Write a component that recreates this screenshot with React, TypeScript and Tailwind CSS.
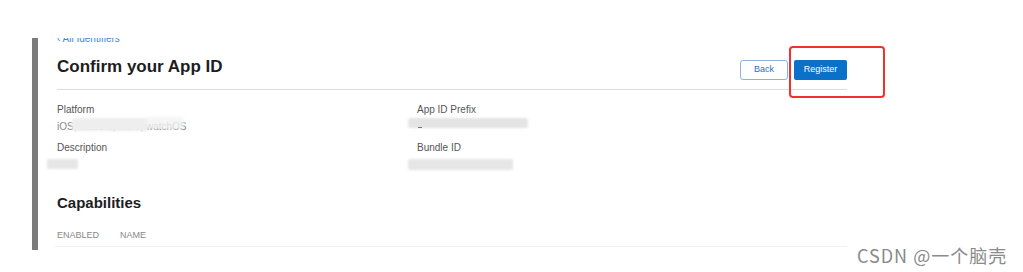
import React from 'react';

const Field: React.FC<{ label: string; children?: React.ReactNode }> = ({ label, children }) => (
  <div>
    <div className="text-[10px] leading-[12px] text-[#555]">{label}</div>
    <div className="relative mt-[5px] h-[12px] text-[10px] leading-[12px]">{children}</div>
  </div>
);

const Smudge: React.FC<{ className: string }> = ({ className }) => (
  <span className={`absolute rounded-[2px] blur-[1px] ${className}`} />
);

const App: React.FC = () => {
  return (
    <div className="relative h-[272px] w-[1023px] overflow-hidden bg-white font-['Liberation_Sans',Arial,sans-serif]">
      <div className="pl-[32px] pt-[38px]">
        <div className="h-[212px] w-[815px] border-l-[6px] border-[#7b7b7b] pl-[19px]">
          <div className="h-[6px] overflow-hidden">
            <div className="-mt-[4px] text-[10px] leading-[10px] text-[#3d8ad8]">‹ All Identifiers</div>
          </div>

          <div className="flex items-start justify-between">
            <h1 className="mt-[13px] text-[17px] font-bold leading-[20px] text-[#1d1d1f]">Confirm your App ID</h1>
            <div className="mt-[16px] flex gap-[6px]">
              <button className="h-[20px] w-[48px] rounded-[3px] border border-[#8db2df] bg-white text-[9px] text-[#2f6fbd]">
                Back
              </button>
              <button className="h-[20px] w-[53px] rounded-[2px] bg-[#0a70c8] text-[9px] text-white">Register</button>
            </div>
          </div>

          <div className="mt-[9px] h-px bg-[#dcdcdc]" />

          <div className="mt-[14px] grid grid-cols-[360px_1fr] gap-y-[9px]">
            <Field label="Platform">
              <span className="block text-[#888]">iOS, macOS, tvOS, watchOS</span>
              <Smudge className="left-[15px] top-[-3px] h-[13px] w-[76px] bg-[#eeeeee]" />
              <Smudge className="left-[90px] top-[-4px] h-[12px] w-[37px] bg-[#f2f2f2]/80" />
            </Field>
            <Field label="App ID Prefix">
              <Smudge className="left-[-9px] top-[-3px] h-[10px] w-[120px] bg-[#e4e4e4]" />
              <span className="absolute left-[1px] top-[6px] h-px w-[4px] bg-[#777]" />
            </Field>
            <Field label="Description">
              <Smudge className="left-[-10px] top-[0px] h-[10px] w-[31px] bg-[#e6e6e6]" />
            </Field>
            <Field label="Bundle ID">
              <Smudge className="left-[-9px] top-[0px] h-[11px] w-[105px] bg-[#e6e6e6]" />
            </Field>
          </div>

          <h2 className="mt-[23px] text-[15px] font-bold leading-[18px] text-[#1d1d1f]">Capabilities</h2>

          <div className="mt-[18px] flex text-[9px] leading-[11px] text-[#888]">
            <span className="w-[63px]">ENABLED</span>
            <span>NAME</span>
          </div>
          <div className="ml-[-2px] mt-[5px] h-px bg-[#f0f0f0]" />
        </div>
      </div>

      <div className="absolute left-[789px] top-[46px] h-[52px] w-[96px] rounded-[4px] border-2 border-[#f23030]" />

      <div className="absolute left-[857px] top-[246px] font-['Noto_Sans_CJK_SC',sans-serif] text-[18px] leading-[18px] tracking-[1px] text-[#8a8a8a]">
        CSDN @一个脑壳
      </div>
    </div>
  );
};

export default App;
